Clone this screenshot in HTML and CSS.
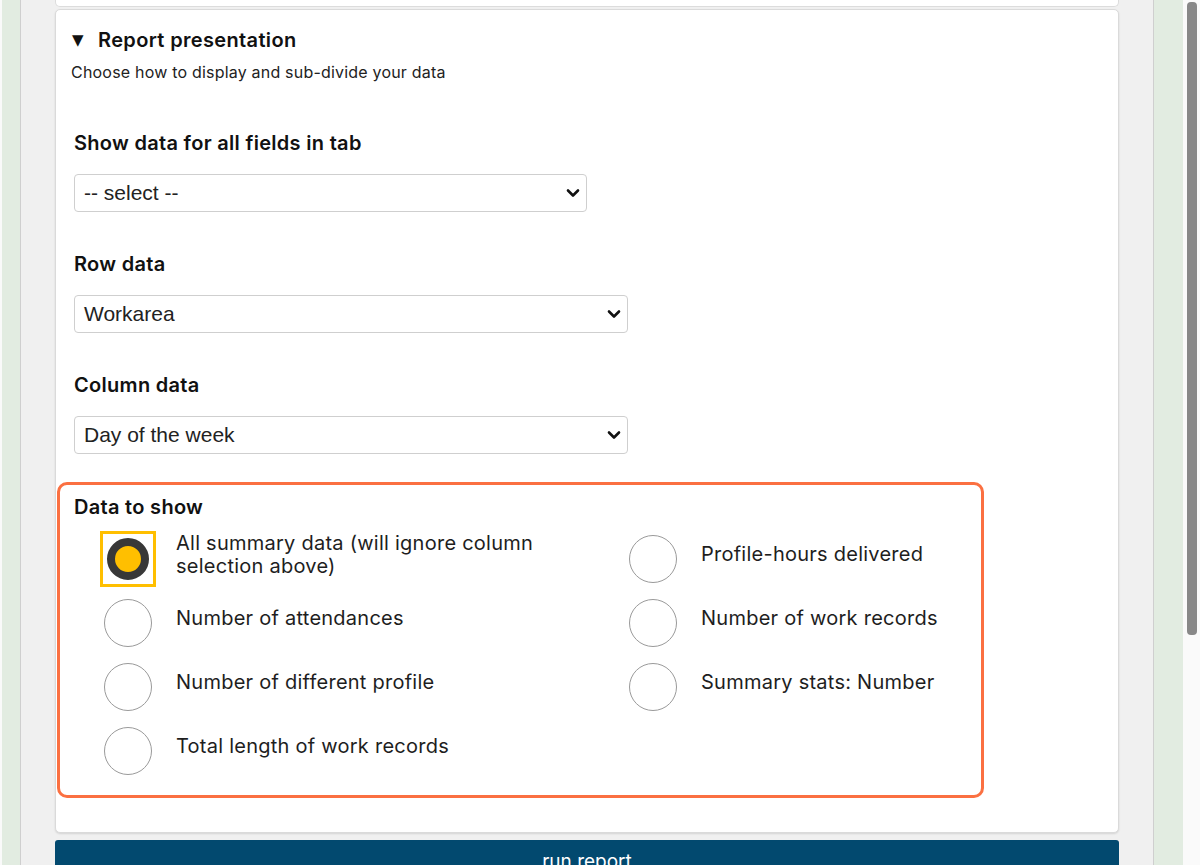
FILE: index.html
```html
<!DOCTYPE html>
<html lang="en">
<head>
<meta charset="utf-8">
<title>Report presentation</title>
<link rel="stylesheet" href="styles.css">
</head>
<body>
<div class="page">
  <div class="green-strip left"></div>
  <div class="panel">
    <div class="prev-card"></div>
    <div class="card">
      <div class="card-head">
        <span class="tri">&#9660;</span>
        <span class="card-title">Report presentation</span>
      </div>
      <p class="card-sub">Choose how to display and sub-divide your data</p>

      <div class="field first">
        <div class="field-label">Show data for all fields in tab</div>
        <div class="select short">
          <span>-- select --</span>
          <svg class="chev" width="14" height="10" viewBox="0 0 14 10"><path d="M2 2.5 L7 7.5 L12 2.5" fill="none" stroke="#111" stroke-width="2.6" stroke-linecap="round" stroke-linejoin="round"/></svg>
        </div>
      </div>

      <div class="field">
        <div class="field-label">Row data</div>
        <div class="select">
          <span>Workarea</span>
          <svg class="chev" width="14" height="10" viewBox="0 0 14 10"><path d="M2 2.5 L7 7.5 L12 2.5" fill="none" stroke="#111" stroke-width="2.6" stroke-linecap="round" stroke-linejoin="round"/></svg>
        </div>
      </div>

      <div class="field">
        <div class="field-label">Column data</div>
        <div class="select">
          <span>Day of the week</span>
          <svg class="chev" width="14" height="10" viewBox="0 0 14 10"><path d="M2 2.5 L7 7.5 L12 2.5" fill="none" stroke="#111" stroke-width="2.6" stroke-linecap="round" stroke-linejoin="round"/></svg>
        </div>
      </div>

      <div class="highlight">
        <div class="field-label">Data to show</div>
        <div class="radio-grid">
          <div class="radio-item">
            <span class="radio-focus"><span class="radio checked"></span></span>
            <span class="radio-text">All summary data (will ignore column<br>selection above)</span>
          </div>
          <div class="radio-item">
            <span class="radio"></span>
            <span class="radio-text">Profile-hours delivered</span>
          </div>
          <div class="radio-item">
            <span class="radio"></span>
            <span class="radio-text">Number of attendances</span>
          </div>
          <div class="radio-item">
            <span class="radio"></span>
            <span class="radio-text">Number of work records</span>
          </div>
          <div class="radio-item">
            <span class="radio"></span>
            <span class="radio-text">Number of different profile</span>
          </div>
          <div class="radio-item">
            <span class="radio"></span>
            <span class="radio-text">Summary stats: Number</span>
          </div>
          <div class="radio-item">
            <span class="radio"></span>
            <span class="radio-text">Total length of work records</span>
          </div>
        </div>
      </div>
    </div>
    <div class="run-btn">run report</div>
  </div>
  <div class="green-strip right"></div>
  <div class="scroll-track"><div class="scroll-thumb"></div></div>
</div>
</body>
</html>
```

FILE: styles.css
```css
html, body {
  margin: 0;
  padding: 0;
  height: 865px;
  overflow: hidden;
  background: #fafafa;
}

.page {
  display: flex;
  height: 865px;
  padding-left: 2px;
  font-family: "Inter", "Liberation Sans", sans-serif;
  color: #1e1e1e;
}

.green-strip {
  background: #e2ece1;
}
.green-strip.left { width: 18px; }
.green-strip.right { width: 29px; }

.panel {
  background: #f0f0f0;
  border-left: 1px solid #cfcfcf;
  border-right: 1px solid #cfcfcf;
  padding: 0 34px;
  box-sizing: border-box;
  width: 1134px;
  overflow: hidden;
}

.prev-card {
  height: 7px;
  background: #fff;
  border: 1px solid #dcdcdc;
  border-top: none;
  border-radius: 0 0 5px 5px;
  box-sizing: border-box;
}

.card {
  margin-top: 2px;
  height: 824px;
  box-sizing: border-box;
  background: #fff;
  border: 1px solid #dadada;
  border-radius: 5px;
  box-shadow: 0 1px 2px rgba(0,0,0,0.12);
  padding-top: 19px;
}

.card-head {
  display: flex;
  align-items: center;
  padding-left: 16px;
  height: 22px;
}
.tri {
  font-size: 15px;
  width: 26px;
  font-family: "DejaVu Sans", sans-serif;
  color: #111;
}
.card-title {
  font-size: 20px;
  font-weight: 600;
  letter-spacing: 0.35px;
  color: #111;
}
.card-sub {
  margin: 0;
  margin-top: 12px;
  padding-left: 15px;
  font-size: 16px;
  letter-spacing: 0.2px;
  line-height: 18px;
  color: #222;
}

.field {
  padding-left: 18px;
  margin-top: 41px;
}
.field.first { margin-top: 51px; }

.field-label {
  font-size: 20px;
  font-weight: 600;
  letter-spacing: 0.3px;
  line-height: 22px;
  color: #111;
}

.select {
  margin-top: 20px;
  width: 554px;
  height: 38px;
  box-sizing: border-box;
  border: 1px solid #cfcfcf;
  border-radius: 4px;
  display: flex;
  align-items: center;
  justify-content: space-between;
  padding: 0 6px 0 9px;
  font-family: "Liberation Sans", Arial, sans-serif;
  font-size: 21px;
  color: #222;
}
.select.short { width: 513px; }
.chev { display: block; }

.highlight {
  margin-top: 28px;
  margin-left: 1px;
  width: 927px;
  height: 316px;
  box-sizing: border-box;
  border: 3px solid #fb7041;
  border-radius: 10px;
  padding: 11px 14px 0 14px;
}

.radio-grid {
  display: grid;
  grid-template-columns: 525px 1fr;
  grid-auto-rows: 48px;
  margin-left: 30px;
  margin-top: 17px;
  row-gap: 16px;
}

.radio-item {
  display: flex;
  align-items: center;
  gap: 24px;
  height: 48px;
}
.radio-text {
  font-size: 20px;
  letter-spacing: 0.25px;
  line-height: 23px;
  color: #1e1e1e;
  margin-bottom: 9px;
}

.radio {
  width: 48px;
  height: 48px;
  box-sizing: border-box;
  border-radius: 50%;
  border: 1px solid #9a9a9a;
  background: #fff;
  flex: none;
}
.radio-focus {
  flex: none;
  width: 48px;
  height: 48px;
  display: flex;
  align-items: center;
  justify-content: center;
  outline: 3px solid #ffbf00;
  outline-offset: 1px;
}
.radio.checked {
  width: 42px;
  height: 42px;
  border: 8px solid #383838;
  background: #ffbf00;
}

.run-btn {
  margin-top: 7px;
  height: 40px;
  background: #02496f;
  border-radius: 3px 3px 0 0;
  color: #fff;
  text-align: center;
  font-size: 19px;
  padding-top: 10px;
  box-sizing: border-box;
}

.scroll-track {
  width: 17px;
  background: #fafafa;
}
.scroll-thumb {
  margin-top: 2px;
  margin-left: 4px;
  width: 10px;
  height: 633px;
  background: #888;
  border-radius: 4px;
}
```
